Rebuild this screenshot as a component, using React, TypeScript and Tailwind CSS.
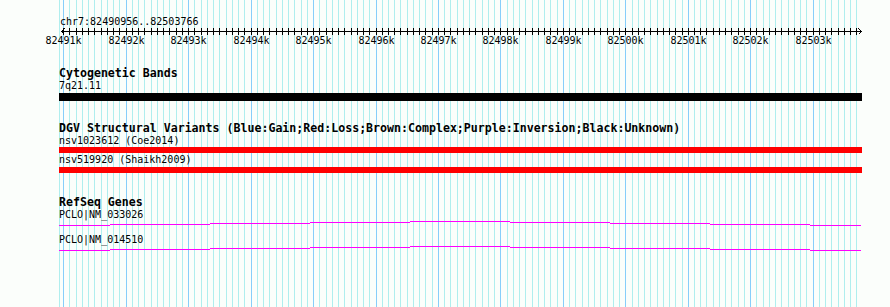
const START = 82490956;
const END = 82503766;
const SCALE = 800 / (END - START);
const px = (bp: number) => Math.round(60.5 + (bp - START) * SCALE);

const gridBps: number[] = [];
for (let bp = 82491000; bp <= END; bp += 100) gridBps.push(bp);
const majorBps = gridBps.filter((bp) => bp % 1000 === 0);

// stepped intron line of the PCLO transcripts, [x0, x1, yOffset]
const geneSegments: [number, number, number][] = [
  [59, 110, 4],
  [110, 210, 3],
  [210, 310, 2],
  [310, 410, 1],
  [410, 510, 0],
  [510, 610, 1],
  [610, 710, 2],
  [710, 810, 3],
  [810, 861, 4],
];

function Background() {
  return (
    <svg className="absolute inset-0" width={890} height={307} shapeRendering="crispEdges">
      <line x1={59.5} y1={0} x2={59.5} y2={307} stroke="#afeeee" />
      {gridBps.map((bp) => (
        <line
          key={bp}
          x1={px(bp) + 0.5}
          y1={0}
          x2={px(bp) + 0.5}
          y2={307}
          stroke={bp % 1000 === 0 ? "#87cefa" : "#afeeee"}
        />
      ))}
      <line x1={61} y1={31.5} x2={862} y2={31.5} stroke="#000" />
      <line x1={61.5} y1={31.5} x2={64.5} y2={28.5} stroke="#000" />
      <line x1={61.5} y1={31.5} x2={64.5} y2={34.5} stroke="#000" />
      <line x1={861.5} y1={31.5} x2={858.5} y2={28.5} stroke="#000" />
      <line x1={861.5} y1={31.5} x2={858.5} y2={34.5} stroke="#000" />
      {gridBps.map((bp) => (
        <line key={"t" + bp} x1={px(bp) + 0.5} y1={28} x2={px(bp) + 0.5} y2={35} stroke="#000" />
      ))}
      {majorBps.map((bp) => (
        <text
          key={"l" + bp}
          x={px(bp) + 0.5}
          y={44}
          textAnchor="middle"
          fontSize={10}
          fontFamily="'DejaVu Sans Mono', monospace"
          fill="#000"
          shapeRendering="auto"
        >
          {bp / 1000}k
        </text>
      ))}
    </svg>
  );
}

function GeneLine() {
  return (
    <svg width={803} height={5} className="block" shapeRendering="crispEdges">
      {geneSegments.map(([x0, x1, y]) => (
        <rect key={x0} x={x0 - 59} y={y} width={x1 - x0} height={1} fill="#ff00ff" />
      ))}
    </svg>
  );
}

function Small({ children }: { children: React.ReactNode }) {
  return <p className="text-[10px] leading-[12px] whitespace-pre">{children}</p>;
}

function Title({ children }: { children: React.ReactNode }) {
  return <h2 className="text-[11.6px] font-bold leading-[13px] whitespace-pre">{children}</h2>;
}

export default function App() {
  return (
    <div className="relative w-[890px] h-[307px] overflow-hidden bg-[#fbfefb] font-['DejaVu_Sans_Mono',monospace] text-black">
      <Background />
      <div className="relative flex flex-col pl-[59px] pt-[16px]">
        <p className="ml-[1px] text-[10px] leading-[12px]">chr7:82490956..82503766</p>

        <div className="mt-[39px]">
          <Title>Cytogenetic Bands</Title>
          <Small>7q21.11</Small>
          <div className="mt-[1px] h-[8px] w-[803px] bg-black" />
        </div>

        <div className="mt-[21px]">
          <Title>DGV Structural Variants (Blue:Gain;Red:Loss;Brown:Complex;Purple:Inversion;Black:Unknown)</Title>
          <Small>nsv1023612 (Coe2014)</Small>
          <div className="h-[6px] w-[803px] bg-[#ff0000]" />
          <div className="mt-[1px]">
            <Small>nsv519920 (Shaikh2009)</Small>
          </div>
          <div className="mt-[1px] h-[6px] w-[803px] bg-[#ff0000]" />
        </div>

        <div className="mt-[23px]">
          <Title>RefSeq Genes</Title>
          <Small>PCLO|NM_033026</Small>
          <GeneLine />
          <div className="mt-[8px]">
            <Small>PCLO|NM_014510</Small>
          </div>
          <GeneLine />
        </div>
      </div>
    </div>
  );
}
